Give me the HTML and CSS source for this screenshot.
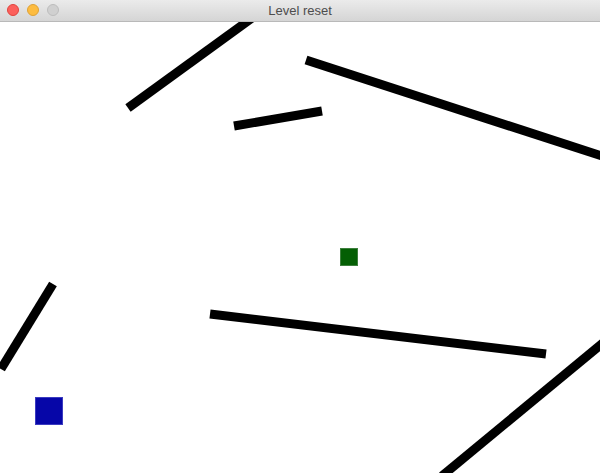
FILE: index.html
```html
<!DOCTYPE html>
<html>
<head>
<meta charset="utf-8">
<title>Level reset</title>
<link rel="stylesheet" href="styles.css">
</head>
<body>
<div class="window">
  <div class="titlebar">
    <div class="lights">
      <span class="light close"></span>
      <span class="light min"></span>
      <span class="light max"></span>
    </div>
    <div class="title">Level reset</div>
  </div>
  <div class="canvas">
    <svg class="scene" width="600" height="451" viewBox="0 22 600 451">
      <g stroke="#000" stroke-width="9" stroke-linecap="butt">
        <line x1="128" y1="108" x2="252" y2="18"/>
        <line x1="306" y1="60" x2="605" y2="157"/>
        <line x1="234" y1="126" x2="322" y2="111"/>
        <line x1="1" y1="369" x2="53" y2="284"/>
        <line x1="210" y1="314" x2="546" y2="354"/>
        <line x1="442" y1="476" x2="604" y2="342"/>
      </g>
      <rect class="goal" x="340.5" y="248.5" width="17" height="17"/>
      <rect class="player" x="35.5" y="397.5" width="27" height="27"/>
    </svg>
  </div>
</div>
</body>
</html>
```
FILE: styles.css
```css
html, body {
  margin: 0;
  padding: 0;
  width: 600px;
  height: 473px;
  overflow: hidden;
  background: #fff;
}
.window {
  display: flex;
  flex-direction: column;
  width: 600px;
  height: 473px;
}
.titlebar {
  position: relative;
  height: 22px;
  flex: 0 0 22px;
  box-sizing: border-box;
  background: linear-gradient(#ebebeb, #d5d5d5);
  border-bottom: 1px solid #b9b9b9;
  display: flex;
  align-items: center;
  justify-content: center;
}
.lights {
  position: absolute;
  left: 7px;
  top: 4px;
  display: flex;
  gap: 8px;
}
.light {
  width: 12px;
  height: 12px;
  border-radius: 50%;
  box-sizing: border-box;
}
.close { background: #fc605c; border: 1px solid #e0443e; }
.min { background: #fdbc40; border: 1px solid #dea236; }
.max { background: #d0d0d0; border: 1px solid #bdbdbd; }
.title {
  font-family: "Liberation Sans", Arial, sans-serif;
  font-size: 13px;
  color: #4d4d4d;
  line-height: 22px;
}
.canvas {
  flex: 1;
  overflow: hidden;
  background: #fff;
}
.scene {
  display: block;
}
.goal {
  fill: #045f04;
  stroke: #3d7f3d;
  stroke-width: 1;
}
.player {
  fill: #0606a8;
  stroke: #3b3bc0;
  stroke-width: 1;
}
```
